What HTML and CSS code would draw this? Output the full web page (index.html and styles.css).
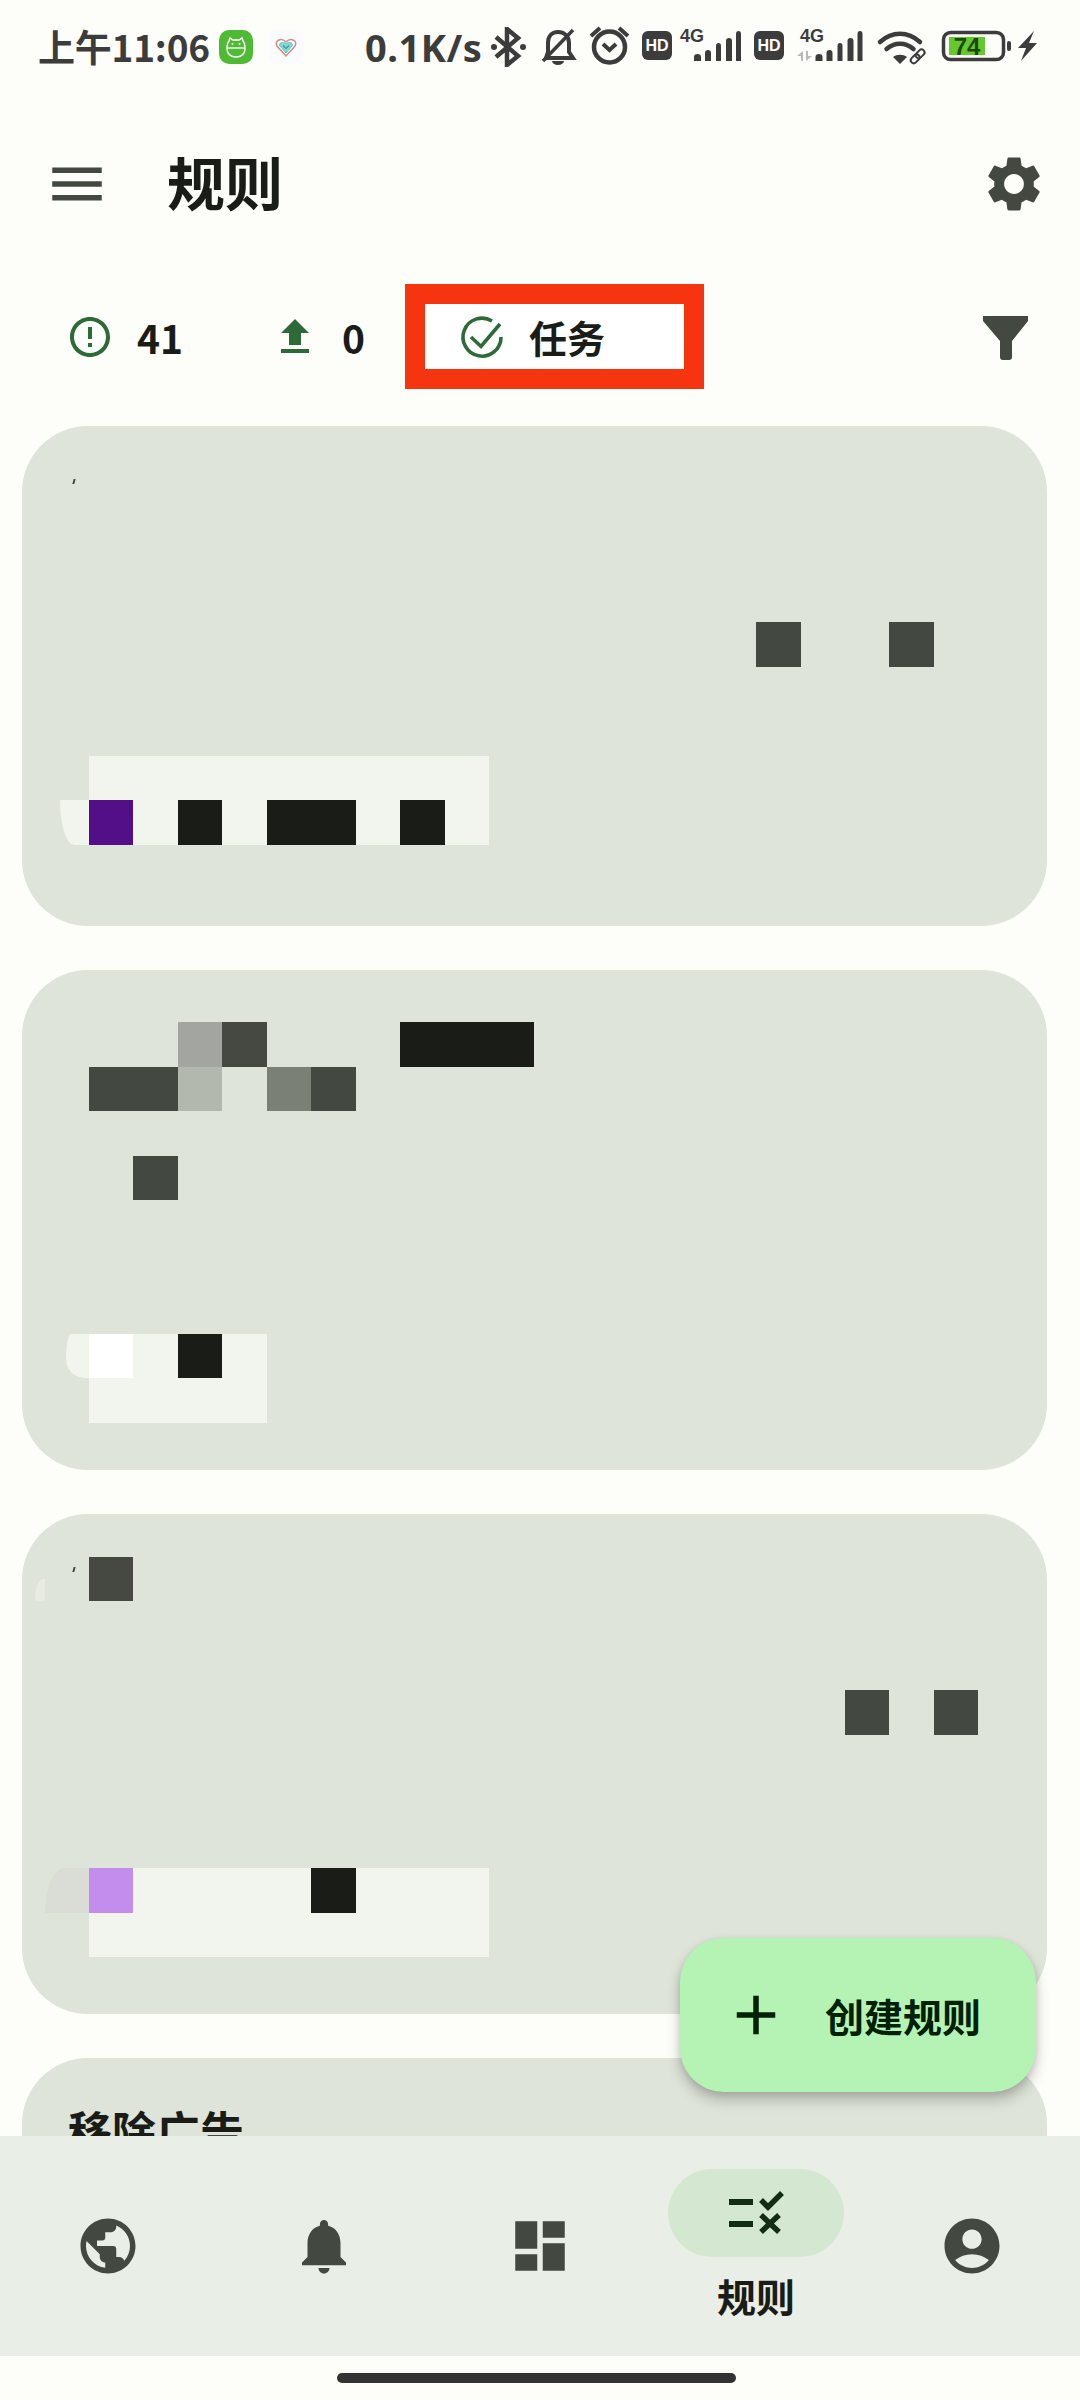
FILE: index.html
```html
<!DOCTYPE html>
<html lang="zh">
<head>
<meta charset="utf-8">
<title>规则</title>
<link rel="stylesheet" href="styles.css">
</head>
<body>
<div class="page">
  <div class="status">
    <span class="time">上午11:06</span>
    <svg class="notif-app" viewBox="0 0 34 34"><rect width="34" height="34" rx="10" fill="#4fbb35"/><path d="M10 11l1-3 3 2h6l3-2 1 3c2 2 2 5 2 8 0 5-4 8-9 8s-9-3-9-8c0-3 0-6 2-8z" fill="none" stroke="#fff" stroke-width="1.5"/><path d="M8 18h18" stroke="#fff" stroke-width="1.3"/><circle cx="13.500" cy="14" r="1" fill="#fff"/><circle cx="20.500" cy="14" r="1" fill="#fff"/></svg>
    <svg class="notif-app notif-gap" viewBox="0 0 34 34"><rect width="34" height="34" rx="8" fill="#fbfafc"/><path d="M17 26L8 16c-3-5 4-9 9-4 5-5 12-1 9 4z" fill="#fff" stroke="#d98a80" stroke-width="1.500"/><path d="M17 23l-6-7c-2-3 3-5 6-2 3-3 8-1 6 2z" fill="#7fdccf" stroke="#59c7c4"/><path d="M14 15.500l3 3 3-3" fill="none" stroke="#3d8fb0" stroke-width="1.200"/></svg>
    <span class="speed">0.1K/s</span>
    <svg class="bt" viewBox="0 0 35 40"><path d="M5 10l22 19-11 9V2l11 9L5 30" fill="none" stroke="#3c3c3c" stroke-width="4.500"/><circle cx="3" cy="20" r="3" fill="#3c3c3c"/><circle cx="32" cy="20" r="3" fill="#3c3c3c"/></svg>
    <svg class="sys" viewBox="541 20 496 56">
      <g fill="none" stroke="#3c3c3c" stroke-width="4">
        <path d="M546 60h27l-4-6V45c0-7-5-11-11-11s-10 4-10 11v9z"/>
        <path d="M543 63l30-31" stroke-width="3.500"/>
        <circle cx="609.500" cy="49" r="15.500" stroke-width="4.500"/>
        <path d="M603 46l6.500 6 6.500-6M591 38l9-8M628 38l-9-8" stroke-width="4"/>
      </g>
      <path d="M552 63h12a6 4 0 0 1-12 0z" fill="#3c3c3c"/>
      <rect x="642" y="33" width="30" height="29" rx="6" fill="#3c3c3c"/>
      <text x="657" y="53" class="hd">HD</text>
      <text x="692" y="44" class="net">4G</text>
      <path d="M694 63v-4q0-3 3.500-3t3.500 3v4zM705 63V55q0-3 3-3t3 3v8zM716 63V48q0-3 2.500-3t2.500 3v15zM726 63V43q0-3 3-3t3 3v20zM736 63V36q0-3 2.500-3t2.500 3v27z" fill="#3c3c3c"/>
      <rect x="754" y="33" width="30" height="29" rx="6" fill="#3c3c3c"/>
      <text x="769" y="53" class="hd">HD</text>
      <text x="812" y="44" class="net">4G</text>
      <path d="M797 58l6-5v10h-2v-5zM812 58l-6 5V53h2v5z" fill="#b9b9b9"/>
      <path d="M815.500 63v-4q0-3 3.500-3t3.500 3v4zM826.500 63V55q0-3 3-3t3 3v8zM837.500 63V48q0-3 2.500-3t2.500 3v15zM847.500 63V43q0-3 3-3t3 3v20zM857.500 63V36q0-3 2.500-3t2.500 3v27z" fill="#3c3c3c"/>
      <g fill="none" stroke="#3c3c3c" stroke-width="4.500" stroke-linecap="round">
        <path d="M880 44c12-11 28-11 40 0"/>
        <path d="M886.500 51c8-7 19-7 27 0"/>
      </g>
      <path d="M900 66l-7-7c4-3 10-3 14 0z" fill="#3c3c3c"/>
      <g fill="none" stroke="#3c3c3c" stroke-width="2" transform="rotate(-45 918 58)">
        <rect x="909" y="55" width="10" height="6" rx="3"/>
        <rect x="916" y="55" width="10" height="6" rx="3"/>
      </g>
      <rect x="943.500" y="34.500" width="60" height="27" rx="7" fill="none" stroke="#3c3c3c" stroke-width="3.500"/>
      <rect x="949" y="39" width="36" height="18" fill="#66c82f"/>
      <text x="967" y="57" class="batt">74</text>
      <rect x="1007" y="43" width="4" height="10" rx="2" fill="#3c3c3c"/>
      <path d="M1034 33l-16 17h8l-5 13 16-18h-8z" fill="#3c3c3c"/>
    </svg>
  </div>

  <header class="appbar">
    <svg class="i66 ic-menu" viewBox="0 0 24 24"><path d="M3 18h18v-2H3v2zm0-5h18v-2H3v2zm0-7v2h18V6H3z"/></svg>
    <h1 class="title">规则</h1>
    <svg class="i66 ic-gear" viewBox="0 0 24 24"><path d="M19.140 12.940c.04-.3.06-.61.06-.94 0-.32-.02-.64-.07-.94l2.030-1.580c.18-.14.23-.41.12-.61l-1.920-3.320c-.12-.22-.37-.29-.59-.22l-2.390.96c-.5-.38-1.030-.7-1.620-.94l-.36-2.540c-.04-.24-.24-.41-.48-.41h-3.840c-.24 0-.43.17-.47.41l-.36 2.540c-.59.24-1.130.57-1.620.94l-2.390-.96c-.22-.08-.47 0-.59.22L2.740 8.870c-.12.21-.08.47.12.61l2.030 1.580c-.05.3-.09.63-.09.94s.02.64.07.94l-2.030 1.580c-.18.14-.23.41-.12.61l1.920 3.320c.12.22.37.29.59.22l2.390-.96c.5.38 1.030.7 1.620.94l.36 2.540c.05.24.24.41.48.41h3.840c.24 0 .44-.17.47-.41l.36-2.540c.59-.24 1.130-.56 1.620-.94l2.390.96c.22.08.47 0 .59-.22l1.920-3.320c.12-.22.07-.47-.12-.61l-2.010-1.580zM12 15.600c-1.980 0-3.600-1.620-3.600-3.600s1.620-3.600 3.600-3.600 3.600 1.620 3.600 3.600-1.620 3.600-3.600 3.600z"/></svg>
  </header>

  <div class="filters">
    <div class="stat stat-first">
      <svg class="i48" viewBox="0 0 24 24"><path d="M11 15h2v2h-2zm0-8h2v6h-2zm.99-5C6.470 2 2 6.480 2 12s4.470 10 9.990 10C17.520 22 22 17.520 22 12S17.520 2 11.990 2zM12 20c-4.420 0-8-3.580-8-8s3.580-8 8-8 8 3.580 8 8-3.580 8-8 8z"/></svg>
      <span class="stat-text">41</span>
    </div>
    <div class="stat stat-second">
      <svg class="i48" viewBox="0 0 24 24"><path d="M5 20h14v-2H5v2zm0-10h4v6h6v-6h4l-7-7-7 7z"/></svg>
      <span class="stat-text">0</span>
    </div>
    <div class="chip">
      <svg class="i48 task-icon" viewBox="0 0 48 48"><path d="M43 24A19 19 0 1 1 34 8M13 24l10 9.500L42 11"/></svg>
      <span class="stat-text chip-text">任务</span>
    </div>
    <svg class="funnel" viewBox="0 0 45 44"><path d="M0 0h45v5L29 25v16a3 3 0 0 1-3 3h-6a3 3 0 0 1-3-3V25L0 5z"/></svg>
  </div>

  <main class="list">
    <section class="card m-a">
      <i class="tick r0 c0"></i>
      <i class="cell light r7 c0 w9"></i>
      <i class="cell light r8 c0 w9"></i>
      <i class="cell tab r8 c0"></i>
      <i class="cell ink r4 c15"></i>
      <i class="cell ink r4 c18"></i>
      <i class="cell purple r8 c0"></i>
      <i class="cell black r8 c2"></i>
      <i class="cell black r8 c4 w2"></i>
      <i class="cell black r8 c7"></i>
    </section>
    <section class="card m-b">
      <i class="cell grey r0 c2"></i>
      <i class="cell ink2 r0 c3"></i>
      <i class="cell black r0 c7 w3"></i>
      <i class="cell ink r1 c0 w2"></i>
      <i class="cell pale r1 c2"></i>
      <i class="cell mid r1 c4"></i>
      <i class="cell ink r1 c5"></i>
      <i class="cell ink r3 c1"></i>
      <i class="cell light r7 c0 w4"></i>
      <i class="cell light r8 c0 w4"></i>
      <i class="cell tab tab-b r7 c0"></i>
      <i class="cell white r7 c0"></i>
      <i class="cell black r7 c2"></i>
    </section>
    <section class="card m-c">
      <i class="tick tick-c r0 c0"></i>
      <i class="cell tab tab-c r0 c0"></i>
      <i class="cell ink2 r0 c0"></i>
      <i class="cell ink r3 c17"></i>
      <i class="cell ink r3 c19"></i>
      <i class="cell light r7 c0 w9"></i>
      <i class="cell light r8 c0 w9"></i>
      <i class="cell tab tab-d r7 c0"></i>
      <i class="cell lilac r7 c0"></i>
      <i class="cell black r7 c5"></i>
    </section>
    <section class="card card-text">
      <h2 class="card-title">移除广告</h2>
    </section>
  </main>

  <button class="fab">
    <svg class="i66" viewBox="0 0 24 24"><path d="M19 13h-6v6h-2v-6H5v-2h6V5h2v6h6v2z"/></svg>
    <span class="fab-label">创建规则</span>
  </button>

  <nav class="nav">
    <div class="nav-item">
      <svg class="i66" viewBox="0 0 24 24"><path d="M12 2C6.480 2 2 6.480 2 12s4.480 10 10 10 10-4.480 10-10S17.520 2 12 2zm-1 17.930c-3.950-.49-7-3.850-7-7.930 0-.62.08-1.210.21-1.790L9 15v1c0 1.100.9 2 2 2v1.930zm6.900-2.540c-.26-.81-1-1.390-1.900-1.390h-1v-3c0-.55-.45-1-1-1H8v-2h2c.55 0 1-.45 1-1V7h2c1.100 0 2-.9 2-2v-.41c2.930 1.190 5 4.060 5 7.410 0 2.080-.8 3.970-2.100 5.390z"/></svg>
    </div>
    <div class="nav-item">
      <svg class="i66" viewBox="0 0 24 24"><path d="M12 22c1.100 0 2-.9 2-2h-4c0 1.100.89 2 2 2zm6-6v-5c0-3.070-1.640-5.640-4.500-6.320V4c0-.83-.67-1.500-1.500-1.500s-1.500.67-1.500 1.500v.68C7.630 5.360 6 7.920 6 11v5l-2 2v1h16v-1l-2-2z"/></svg>
    </div>
    <div class="nav-item">
      <svg class="i66" viewBox="0 0 24 24"><path d="M3 13h8V3H3v10zm0 8h8v-6H3v6zm10 0h8V11h-8v10zm0-18v6h8V3h-8z"/></svg>
    </div>
    <div class="nav-item nav-item-active">
      <div class="pill">
        <svg class="rules-icon" viewBox="0 0 66 66"><path d="M6 19h24v6H6zM6 41h24v6H6z"/><path d="M38 20l7 7 14-14M38 35l18 17M56 35L38 52" fill="none"/></svg>
      </div>
      <span class="nav-label">规则</span>
    </div>
    <div class="nav-item">
      <svg class="i66" viewBox="0 0 24 24"><path d="M12 2C6.480 2 2 6.480 2 12s4.480 10 10 10 10-4.480 10-10S17.520 2 12 2zm0 4c1.930 0 3.500 1.570 3.500 3.500S13.930 13 12 13s-3.500-1.570-3.500-3.500S10.070 6 12 6zm0 14c-2.030 0-4.430-.82-6.140-2.880C7.550 15.800 9.680 15 12 15s4.450.8 6.140 2.120C16.430 19.180 14.030 20 12 20z"/></svg>
    </div>
  </nav>
  <div class="home"><span class="home-bar"></span></div>
</div>
</body>
</html>
```

FILE: styles.css
```css
* { box-sizing: border-box; }
html, body { margin: 0; padding: 0; }
body { font-family: "Noto Sans CJK SC", "Noto Sans", sans-serif; background: #fdfef9; }
.page { position: relative; width: 1080px; height: 2400px; display: flex; flex-direction: column; overflow: hidden; background: #fdfef9; }

/* status bar */
.status { height: 96px; flex: none; display: flex; align-items: center; padding: 0 0 0 38px; color: #3c3c3c; font-weight: 700; }
.time { font-size: 37px; line-height: 40px; width: 171px; white-space: nowrap; letter-spacing: -0.2px; margin-top: -4px; }
.notif-app { width: 34px; height: 34px; margin: -2px 0 0 10px; flex: none; }
.notif-gap { margin-left: 16px; }
.speed { font-family: "Noto Sans", "Noto Sans CJK SC", sans-serif; font-size: 38px; line-height: 40px; margin: -2px 0 0 62px; width: 118px; white-space: nowrap; letter-spacing: .5px; }
.bt { width: 35px; height: 40px; margin: -2px 0 0 8px; flex: none; }
.sys { width: 496px; height: 56px; margin: -4px 0 0 15px; flex: none; }
.hd { font: 700 16px "Liberation Sans", sans-serif; fill: #fff; text-anchor: middle; }
.net { font: 700 18px "Liberation Sans", sans-serif; fill: #3c3c3c; text-anchor: middle; }
.batt { font: 700 24px "Liberation Sans", sans-serif; fill: #1c4a05; text-anchor: middle; }

/* app bar */
.appbar { height: 176px; flex: none; display: flex; align-items: center; padding: 0 33px 0 44px; }
.i66 { width: 66px; height: 66px; flex: none; display: block; }
.i48 { width: 48px; height: 48px; flex: none; display: block; fill: #2d6a38; }
.task-icon { fill: none; stroke: #2d6a38; stroke-width: 3.6; }
.ic-menu, .ic-gear { fill: #434840; }
.ic-gear { margin-left: auto; }
.title { margin: -6px 0 0 57px; font-size: 58px; line-height: 70px; font-weight: 700; color: #1a1c18; }

/* filter row */
.filters { height: 154px; flex: none; display: flex; align-items: flex-start; padding: 12px 52px 0 66px; }
.stat { display: flex; align-items: center; gap: 23px; height: 105px; color: #1a1c18; }
.stat-first { width: 205px; }
.stat-second { width: 134px; }
.stat-text { font-size: 39px; line-height: 50px; font-weight: 700; color: #1a1c18; }
.chip { display: flex; align-items: center; gap: 23px; width: 299px; height: 105px; padding-left: 33px; background: #fff; border: 20px solid #f63410; }
.chip-text { font-size: 38px; }
.funnel { width: 45px; height: 44px; margin: 32px 0 0 auto; fill: #434840; flex: none; }

/* cards */
.list { flex: 1; min-height: 0; overflow: hidden; display: flex; flex-direction: column; gap: 44px; padding: 0 33px 0 22px; }
.card { flex: none; height: 500px; border-radius: 66px; background: #dee4da; padding-left: 67px; display: grid; grid-template-columns: repeat(21, 44.47px); grid-template-rows: repeat(9, 44.5px); align-content: start; }
.m-a { padding-top: 18px; }
.m-b { padding-top: 52px; }
.m-c { padding-top: 42.5px; }
.cell { display: block; }
.light { background: #f2f4ee; }
.ink { background: #434840; }
.ink2 { background: #464842; }
.black { background: #1a1c18; }
.purple { background: #520f87; }
.lilac { background: #c28dec; }
.white { background: #fff; }
.grey { background: #a3a5a0; }
.pale { background: #b3b8af; }
.mid { background: #7a8075; }
.tab { background: #f2f4ee; margin-left: -29px; margin-right: 44px; border-bottom-left-radius: 14px 45px; }
.tab-b { margin-left: -23px; margin-right: 40px; border-radius: 8px 0 0 30px / 40px 0 0 30px; }
.tab-c { background: #e8ebe4; margin-left: -54px; margin-right: 88px; margin-top: 22px; border-radius: 8px 0 0 0 / 22px 0 0 0; }
.tab-d { background: #dadcd6; margin-left: -44px; margin-right: 40px; border-radius: 20px 0 0 0 / 45px 0 0 0; }
.tick { display: block; width: 2px; height: 5px; margin: 35px 0 0 -16px; background: #434840; transform: skewX(-15deg); }
.tick-c { margin-top: 10px; }
.r0 { grid-row: 1; } .r1 { grid-row: 2; } .r3 { grid-row: 4; } .r4 { grid-row: 5; } .r7 { grid-row: 8; } .r8 { grid-row: 9; }
.c0 { grid-column-start: 1; } .c1 { grid-column-start: 2; } .c2 { grid-column-start: 3; } .c3 { grid-column-start: 4; }
.c4 { grid-column-start: 5; } .c5 { grid-column-start: 6; } .c7 { grid-column-start: 8; }
.c15 { grid-column-start: 16; } .c17 { grid-column-start: 18; } .c18 { grid-column-start: 19; } .c19 { grid-column-start: 20; }
.w2 { grid-column-end: span 2; } .w3 { grid-column-end: span 3; } .w4 { grid-column-end: span 4; } .w9 { grid-column-end: span 9; }
.card-text { display: block; padding: 42px 0 0 46px; }
.card-title { margin: 0; font-size: 44px; line-height: 60px; font-weight: 700; color: #1a1c18; }

/* fab */
.fab { position: absolute; left: 680px; top: 1938px; width: 356px; height: 154px; border: 0; border-radius: 44px; background: #b4f3b3; box-shadow: 0 8px 14px rgba(0,0,0,.22), 0 2px 6px rgba(0,0,0,.1); display: flex; align-items: center; gap: 36px; padding: 0 0 0 43px; color: #002106; font-family: inherit; }
.fab .i66 { fill: #002106; }
.fab-label { font-size: 39px; line-height: 50px; font-weight: 700; white-space: nowrap; }

/* nav */
.nav { position: relative; height: 220px; flex: none; display: grid; grid-template-columns: repeat(5, 216px); background: #e9efe6; }
.nav-item { display: flex; align-items: center; justify-content: center; }
.nav-item .i66 { fill: #434840; }
.nav-item-active { flex-direction: column; justify-content: flex-start; padding-top: 33px; }
.pill { width: 176px; height: 88px; border-radius: 44px; background: #d4e8d1; display: flex; align-items: center; justify-content: center; }
.rules-icon { width: 66px; height: 66px; fill: #132c14; }
.rules-icon path + path { stroke: #132c14; stroke-width: 5.5; fill: none; }
.nav-label { margin-top: 14px; font-size: 39px; line-height: 48px; font-weight: 700; color: #1a1c18; }

/* home */
.home { height: 44px; flex: none; display: flex; align-items: center; justify-content: center; padding-right: 7px; }
.home-bar { display: block; width: 399px; height: 10px; border-radius: 5px; background: #333; }
```
